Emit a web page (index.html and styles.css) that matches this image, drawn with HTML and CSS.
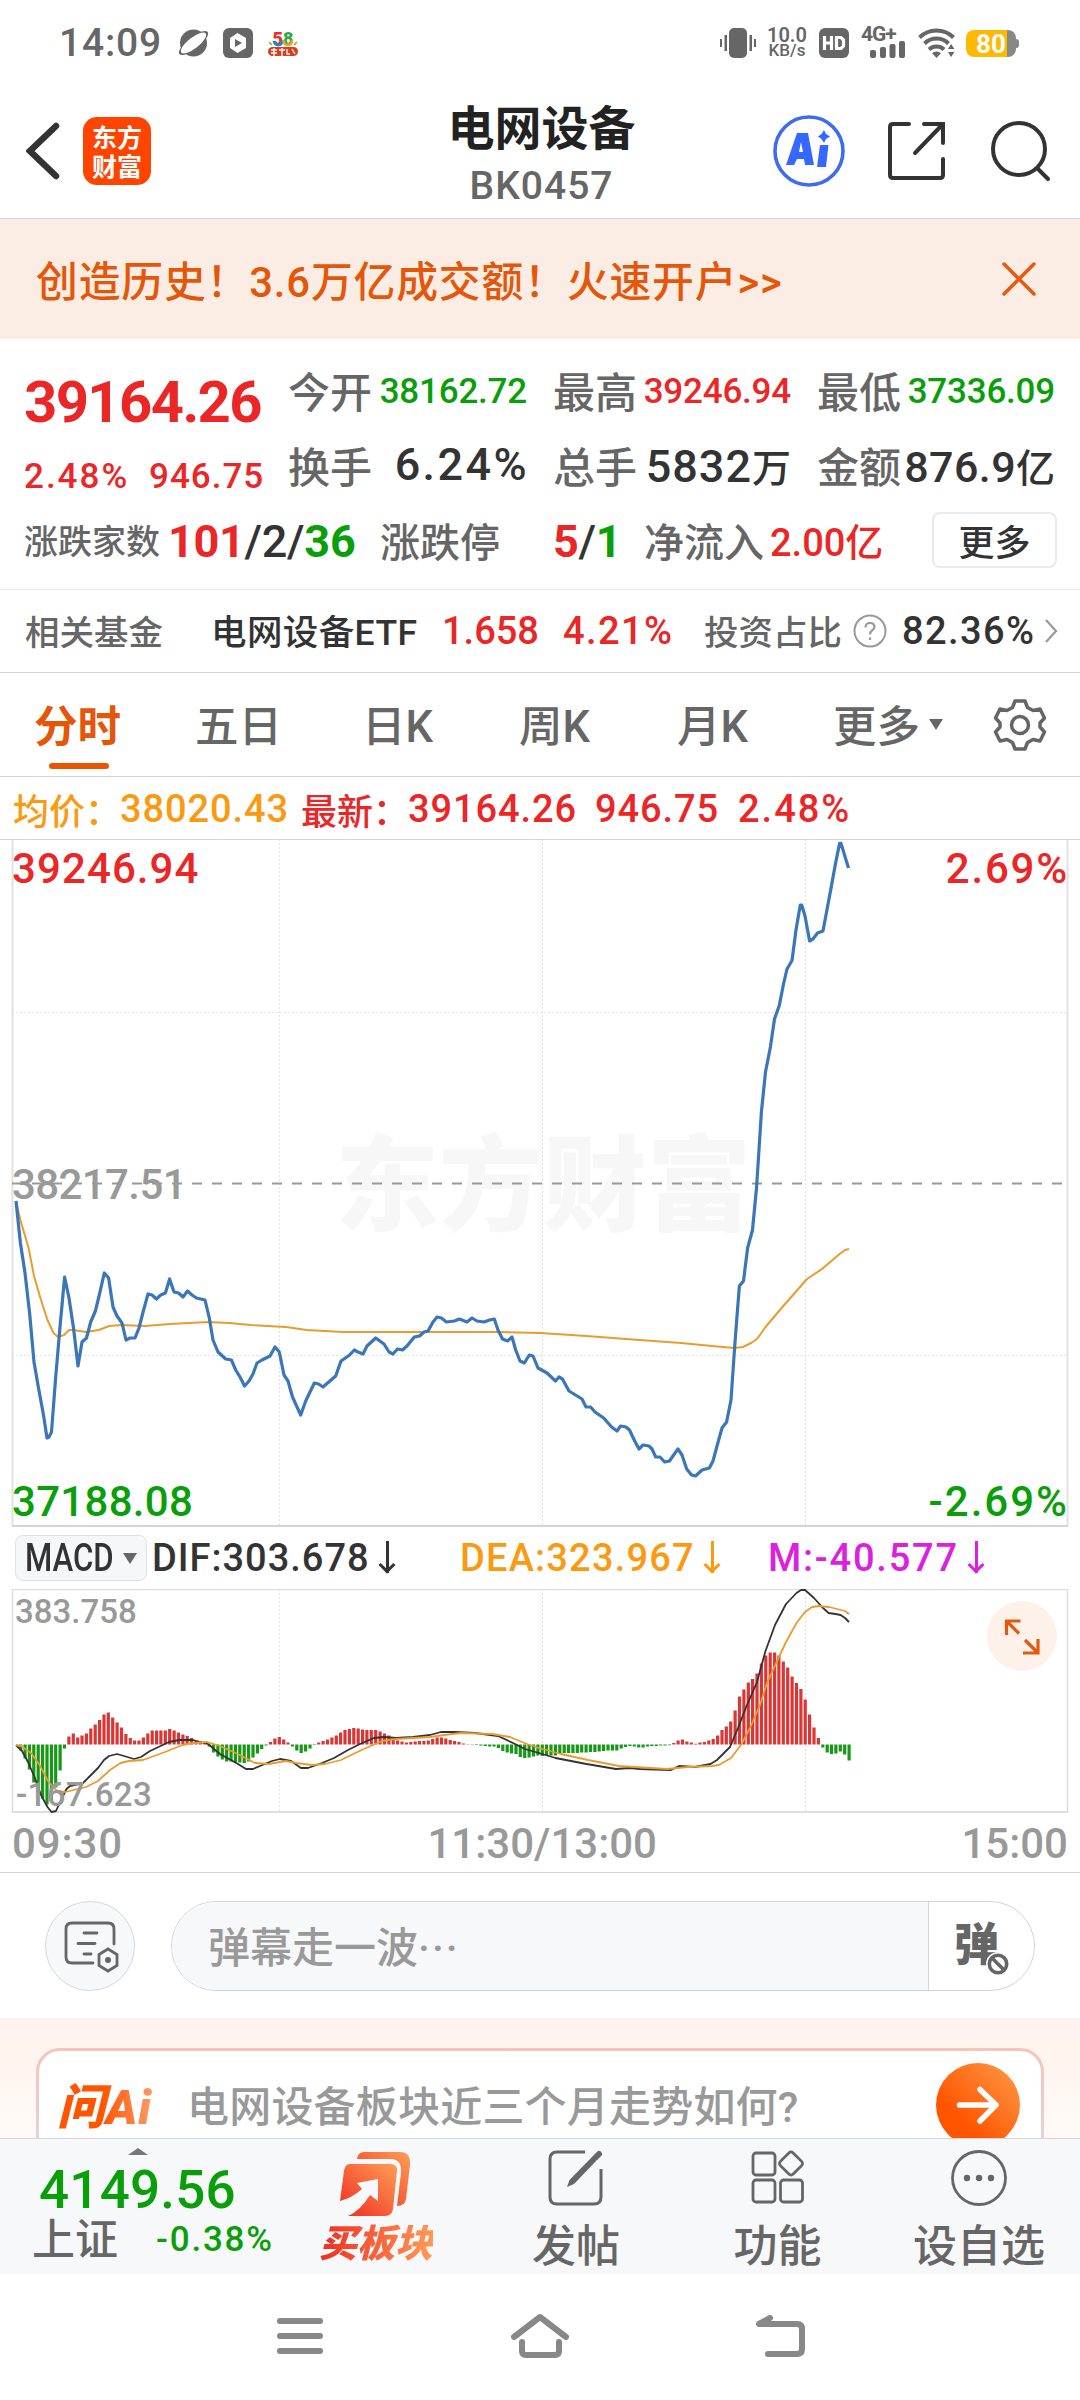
FILE: index.html
```html
<!DOCTYPE html>
<html lang="zh-CN">
	<head>
		<meta charset="UTF-8" />
		<meta name="viewport" content="width=device-width, initial-scale=1.0" />
		<title>电网设备 BK0457</title>
		<link rel="stylesheet" href="styles.css">
	</head>
	<body>
		<div class="page">
			<div class="status">
				<span class="clock">14:09</span>
				<svg class="st-planet" width="31" height="28" viewBox="0 0 31 28">
					<circle cx="15.500" cy="14" r="13.500" fill="#666" />
					<ellipse cx="15.500" cy="14" rx="18" ry="6" transform="rotate(-38 15.500 14)" fill="#666" />
					<ellipse cx="15.500" cy="14" rx="15.500" ry="5.500" transform="rotate(-38 15.500 14)" fill="#fff" />
				</svg>
				<svg class="st-play" width="30" height="30" viewBox="0 0 30 30">
					<rect width="30" height="30" rx="6" fill="#666" />
					<path d="M14.500 5 L23 10 V20 L14.500 25 L7 20 V10 Z" fill="#fff" />
					<path d="M12 11 L19 15 L12 19 Z" fill="#666" />
				</svg>
				<svg class="st-58" width="30" height="30" viewBox="0 0 30 30">
					<text x="4.500" y="17" class="t58" fill="#e8312a">5</text>
					<text x="15" y="17" class="t58" fill="#2fa84a">8</text>
					<path d="M6 13 q1 4 4 4 q4 0 4 -5" stroke="#1f86d6" stroke-width="3" fill="none" />
					<path d="M15.500 12 q0 5 4.500 5 q4 0 4 -5" stroke="#f5a21d" stroke-width="2.500" fill="none" />
					<rect x="0" y="19" width="30" height="9" rx="4.500" fill="#d8401f" />
					<path d="M3 22 H9 M3 25 H9 M6 20 V28 M11 22 H17 M14 20 V28 M19 21 V26 H22 M24 21 L27 26" stroke="#fff" stroke-width="1.300" fill="none" />
					<path d="M1 14 l3 3 M29 14 l-3 3" stroke="#7cb342" stroke-width="1.500" />
				</svg>
				<span class="grow"></span>
				<svg width="36" height="30" viewBox="0 0 36 30" fill="#666">
					<rect x="9" y="0" width="18" height="30" rx="5" />
					<rect x="4.500" y="7" width="2.500" height="16" />
					<rect x="0" y="11" width="2" height="8" />
					<rect x="29.500" y="7" width="2.500" height="16" />
					<rect x="34" y="11" width="2" height="8" />
				</svg>
				<span class="speed"><b>10.0</b><i>KB/s</i></span>
				<svg class="st-hd" width="30" height="30" viewBox="0 0 30 30">
					<rect width="30" height="30" rx="6" fill="#666" />
					<path d="M5.500 8 V22 M12.500 8 V22 M5.500 15 H12.500 M17.500 9.500 H22 L24.500 12 V18 L22 20.500 H17.500 Z" fill="none" stroke="#fff" stroke-width="3.200" />
				</svg>
				<span class="net">
					<em>4G+</em>
					<svg width="36" height="17" viewBox="0 0 36 17" fill="#666">
						<rect x="0" y="9" width="6" height="8" rx="2" />
						<rect x="10" y="6" width="6" height="11" rx="2" />
						<rect x="19.500" y="3" width="6" height="14" rx="2" />
						<rect x="29" y="0" width="6" height="17" rx="2" />
					</svg>
				</span>
				<svg class="st-wifi" width="38" height="30" viewBox="0 0 38 30">
					<g fill="none" stroke="#666" stroke-width="4">
						<path d="M1.500 9.500 A24 24 0 0 1 35.500 9.500" />
						<path d="M6.500 15.500 A17 17 0 0 1 30.500 15.500" />
						<path d="M11 21.500 A11 11 0 0 1 26 21.500" />
					</g>
					<path d="M14 25 Q18.500 22 23 25 L18.500 30 Z M30 21 L33 16 L36.500 21 Z M30 24 L33 29 L36.500 24 Z" fill="#666" />
				</svg>
				<span class="battery"><span>80</span></span>
			</div>

			<div class="header">
				<svg class="back" width="34" height="58" viewBox="0 0 34 58">
					<path d="M30 4 L4 29 L30 54" fill="none" stroke="#333" stroke-width="6.500" stroke-linecap="round" stroke-linejoin="miter" />
				</svg>
				<div class="logo"><span>东方</span><span>财富</span></div>
				<div class="title">
					<h1>电网设备</h1>
					<p>BK0457</p>
				</div>
				<svg class="ai" width="74" height="74" viewBox="0 0 74 74">
					<circle cx="37" cy="37" r="34" fill="none" stroke="#3f6bf0" stroke-width="3.600" />
					<path fill="#3568ff" fill-rule="evenodd" d="M25 19 H36 L42 51 H33 L32 45 H25 L22 51 H14 Z M29 28 L27 38 H31 Z" />
					<path fill="#3568ff" d="M48 31 H56.500 L54 53 H45 Z M52 16 L54 20 L58 22.500 L54 25 L52 29 L49.500 25 L46 22.500 L49.500 20 Z" />
				</svg>
				<svg class="share" width="60" height="60" viewBox="0 0 60 60" fill="none" stroke="#333" stroke-width="4" stroke-linecap="round">
					<path d="M22 3 H6 Q3 3 3 6 V54 Q3 57 6 57 H53 Q56 57 56 54 V38" />
					<path d="M37 3 H56 V22" />
					<path d="M55 4 L28 32" />
				</svg>
				<svg class="search" width="62" height="62" viewBox="0 0 62 62" fill="none" stroke="#333" stroke-width="4" stroke-linecap="round">
					<circle cx="29" cy="29" r="26" />
					<path d="M48 49 L58 59" />
				</svg>
			</div>

			<div class="banner">
				<span>创造历史！3.6万亿成交额！火速开户&gt;&gt;</span>
				<svg width="34" height="34" viewBox="0 0 34 34">
					<path d="M2 2 L32 32 M32 2 L2 32" stroke="#e9580c" stroke-width="3.500" stroke-linecap="round" />
				</svg>
			</div>

			<div class="quote">
				<div class="quote-main">
					<div class="price red">39164.26</div>
					<div class="change red"><span class="pct">2.48%</span><span>946.75</span></div>
				</div>
				<div class="stats">
					<div class="stat"><label>今开</label><span class="sm green">38162.72</span></div>
					<div class="stat"><label>最高</label><span class="sm red">39246.94</span></div>
					<div class="stat"><label>最低</label><span class="sm green">37336.09</span></div>
					<div class="stat"><label>换手</label><span class="lg">6.24%</span></div>
					<div class="stat"><label>总手</label><span class="wan">5832<small>万</small></span></div>
					<div class="stat"><label>金额</label><span class="yi">876.9<small>亿</small></span></div>
				</div>
			</div>
			<div class="breadth">
				<label class="s34">涨跌家数</label>
				<span class="nums"><b class="red">101</b>/2/<b class="green">36</b></span>
				<label class="s40">涨跌停</label>
				<span class="nums"><b class="red">5</b>/<b class="green">1</b></span>
				<label class="s40">净流入</label>
				<span class="inflow red">2.00亿</span>
				<button class="more">更多</button>
			</div>

			<div class="fund">
				<label>相关基金</label>
				<span class="fund-name">电网设备ETF</span>
				<span class="red">1.658</span>
				<span class="ratio red">4.21%</span>
				<label>投资占比</label>
				<svg width="34" height="34" viewBox="0 0 34 34">
					<circle cx="17" cy="17" r="15.500" fill="none" stroke="#999" stroke-width="2" />
					<path d="M12.500 13.500 Q12.500 9 17 9 Q21.500 9 21.500 13 Q21.500 15 19 16.500 Q17 18 17 20.500 M17 23.500 V26" fill="none" stroke="#999" stroke-width="2.200" />
				</svg>
				<span class="ratio">82.36%</span>
				<svg width="14" height="26" viewBox="0 0 14 26">
					<path d="M2 2 L12 13 L2 24" fill="none" stroke="#999" stroke-width="2.200" />
				</svg>
			</div>

			<div class="tabs">
				<span class="tab active">分时</span>
				<span class="tab">五日</span>
				<span class="tab">日K</span>
				<span class="tab">周K</span>
				<span class="tab">月K</span>
				<span class="tab">更多</span>
				<i class="caret"></i>
				<svg width="54" height="54" viewBox="0 0 54 54" fill="none" stroke="#666" stroke-width="3.500">
					<path d="M22 3 H32 L34.500 9.500 L40 12.500 L47 11 L51.500 20 L47 25 V29 L51.500 34 L47 43 L40 41.500 L34.500 44.500 L32 51 H22 L19.500 44.500 L14 41.500 L7 43 L2.500 34 L7 29 V25 L2.500 20 L7 11 L14 12.500 L19.500 9.500 Z" stroke-linejoin="round" />
					<circle cx="27" cy="27" r="8.500" />
				</svg>
			</div>

			<div class="legend">
				<span class="orange">均价：</span>
				<span class="num orange">38020.43</span>
				<span class="red">最新：</span>
				<span class="num red">39164.26</span>
				<span class="num red">946.75</span>
				<span class="num pct red">2.48%</span>
			</div>

			<div class="chart">
				<svg width="1080" height="689" viewBox="0 0 1080 689">
					<text class="watermark" x="335" y="384">东方财富</text>
					<g stroke="#e2e2e2" stroke-width="1" stroke-dasharray="2 2">
						<path d="M279.500 0 V687 M542.500 0 V687 M805.500 0 V687 M12 173.500 H1067 M12 516.500 H1067" />
					</g>
					<path d="M12.500 0 V687 M1067.500 0 V687" stroke="#e2e2e2" stroke-width="2" />
					<path d="M0 .5 H1080" stroke="#d4d4d4" />
					<path d="M12 687 H1068" stroke="#d4d4d4" stroke-width="2" />
					<path d="M12 344.500 H1067" stroke="#999" stroke-width="2" stroke-dasharray="10 10" />
					<polyline id="avg" fill="none" stroke="#eb9b2d" stroke-width="2" stroke-linejoin="round" />
					<polyline id="price" fill="none" stroke="#3a76b8" stroke-width="3.200" stroke-linejoin="round" />
				</svg>
				<span class="lab top-left red">39246.94</span>
				<span class="lab top-right red">2.69%</span>
				<span class="lab mid-left">38217.51</span>
				<span class="lab bottom-left green">37188.08</span>
				<span class="lab bottom-right green">-2.69%</span>
			</div>

			<div class="indicator">
				<span class="picker"><b>MACD</b><i class="caret"></i></span>
				<span class="dif">DIF:303.678<i class="down"></i></span>
				<span class="dea orange">DEA:323.967<i class="down"></i></span>
				<span class="m purple">M:-40.577<i class="down"></i></span>
			</div>

			<div class="macd">
				<svg width="1080" height="225" viewBox="0 0 1080 225">
					<path d="M279.500 0 V223 M542.500 0 V223 M805.500 0 V223" stroke="#e2e2e2" stroke-dasharray="2 2" />
					<path d="M12 .5 H1068 M12.500 0 V223 M1067.500 0 V223" stroke="#dedede" stroke-width="1.500" />
					<path d="M12 223 H1068" stroke="#dedede" stroke-width="2" />
					<g id="bars"></g>
					<polyline id="dif" fill="none" stroke="#333" stroke-width="1.800" stroke-linejoin="round" />
					<polyline id="dea" fill="none" stroke="#eb9b2d" stroke-width="1.800" stroke-linejoin="round" />
				</svg>
				<span class="lab macd-max">383.758</span>
				<span class="lab macd-min">-167.623</span>
				<svg class="expand" width="70" height="70" viewBox="0 0 70 70">
					<circle cx="35" cy="35" r="35" fill="#fef1ea" />
					<path d="M19.500 34 V20 H33.500 M20 20.500 L32 32.500 M51 38 V52 H36 M50.500 51.500 L38 39" fill="none" stroke="#e25a10" stroke-width="3.200" />
				</svg>
			</div>
			<div class="times"><span class="open">09:30</span><span>11:30/13:00</span><span>15:00</span></div>

			<div class="danmu">
				<div class="danmu-set">
					<svg width="56" height="52" viewBox="0 0 56 52" fill="none" stroke="#666" stroke-width="2.800" stroke-linecap="round">
						<path d="M51 23 V8 Q51 2 45 2 H9 Q3 2 3 8 V36 Q3 42 9 42 H30" />
						<path d="M21 12 H34 M15 22.500 H32 M21 33 H28" />
						<path d="M45 28 L54 33.500 V44.500 L45 50 L36 44.500 V33.500 Z" />
						<circle cx="45" cy="39" r="3" fill="#666" stroke="none" />
					</svg>
				</div>
				<div class="danmu-box">
					<div class="danmu-input">弹幕走一波<span>···</span></div>
					<div class="danmu-switch">
						<span>弹</span>
						<svg width="24" height="24" viewBox="0 0 24 24">
							<circle cx="12" cy="12" r="12" fill="#fff" />
							<circle cx="12" cy="12" r="8.700" fill="none" stroke="#666" stroke-width="3.600" />
							<path d="M6.500 6.500 L17.500 17.500" stroke="#666" stroke-width="3.500" />
						</svg>
					</div>
				</div>
			</div>

			<div class="ask">
				<div class="ask-card">
					<span class="ask-logo">问Ai</span>
					<span class="ask-text">电网设备板块近三个月走势如何?</span>
					<svg width="84" height="84" viewBox="0 0 84 84">
						<defs>
							<linearGradient id="go" x1=".3" y1=".7" x2=".9" y2=".1">
								<stop offset="0" stop-color="#ff5500" />
								<stop offset="1" stop-color="#ff9240" />
							</linearGradient>
						</defs>
						<circle cx="42" cy="42" r="42" fill="url(#go)" />
						<path d="M23.500 42 H60 M44 26.500 L60 42 L44 58" fill="none" stroke="#fff" stroke-width="5.500" stroke-linecap="round" stroke-linejoin="round" />
					</svg>
				</div>
			</div>

			<div class="toolbar">
				<div class="index">
					<i class="up"></i>
					<div class="index-price green">4149.56</div>
					<div class="index-row"><span>上证</span><em class="green">-0.38%</em></div>
				</div>
				<div class="tool buy">
					<svg width="72" height="66" viewBox="0 0 72 66">
						<defs>
							<linearGradient id="hot" x1="0" y1="1" x2="1" y2="0">
								<stop offset="0" stop-color="#f02a22" />
								<stop offset="1" stop-color="#ff9f56" />
							</linearGradient>
						</defs>
						<path d="M17 8 Q18 1 24 1 H60 Q71 1 70 14 L66 48 Q65 55 57 55 L61 22 Q62 9 52 8 Z" fill="url(#hot)" />
						<path d="M10 13 H50 Q58 13 57 20 L53 58 Q52 65 45 65 H8 Q20 60 30 44 L38 50 V28 L17 32 L22 38 Q12 47 0 50 L4 20 Q5 13 10 13 Z" fill="url(#hot)" />
					</svg>
					<span>买板块</span>
				</div>
				<div class="tool">
					<svg width="58" height="58" viewBox="0 0 58 58" fill="none" stroke="#666" stroke-width="3">
						<path d="M38 3 H10 Q3 3 3 10 V48 Q3 55 10 55 H47 Q54 55 54 48 V20" />
						<path d="M20 38 L22.500 31 L45 8 L49 12 L27 35 Z" fill="#666" stroke="none" />
						<path d="M48 9 L52 5" stroke-width="6" stroke-linecap="round" />
					</svg>
					<span>发帖</span>
				</div>
				<div class="tool">
					<svg width="54" height="58" viewBox="0 0 54 58" fill="none" stroke="#666" stroke-width="2.800">
						<rect x="2" y="4" width="22" height="22" rx="3" />
						<rect x="2" y="31" width="22" height="22" rx="3" />
						<rect x="29.500" y="31" width="22" height="22" rx="3" />
						<rect x="31" y="5.500" width="18" height="18" rx="3" transform="rotate(45 40 14.500)" />
					</svg>
					<span>功能</span>
				</div>
				<div class="tool fav">
					<svg width="58" height="58" viewBox="0 0 58 58">
						<circle cx="29" cy="29" r="26.500" fill="none" stroke="#666" stroke-width="2.800" />
						<g fill="#666"><circle cx="17" cy="29" r="3.200" /><circle cx="29" cy="29" r="3.200" /><circle cx="41" cy="29" r="3.200" /></g>
					</svg>
					<span>设自选</span>
				</div>
			</div>

			<div class="sysnav">
				<svg width="46" height="38" viewBox="0 0 46 38" stroke="#888" stroke-width="6" stroke-linecap="round">
					<path d="M3 4 H43 M3 19 H43 M3 34 H43" />
				</svg>
				<svg width="60" height="46" viewBox="0 0 60 46" fill="none" stroke="#888" stroke-width="6" stroke-linecap="round" stroke-linejoin="round">
					<path d="M4 24 L30 4 L56 24 M12 29 V38 Q12 42 16 42 H45 Q49 42 49 38 V29" />
				</svg>
				<svg width="50" height="44" viewBox="0 0 50 44" fill="none" stroke="#888" stroke-width="6" stroke-linecap="round" stroke-linejoin="round">
					<path d="M14 4 L3 10 H41 Q46 10 46 15 V35 Q46 40 41 40 H12" />
				</svg>
			</div>
		</div>
		<script src="chart.js"></script>
	</body>
</html>
```
FILE: styles.css
```css
body,
html {
	margin: 0;
	padding: 0;
	background: #fff;
}
* {
	box-sizing: border-box;
}
.page {
	width: 1080px;
	height: 2400px;
	overflow: hidden;
	display: flex;
	flex-direction: column;
	font-family: Roboto, "Noto Sans CJK SC", sans-serif;
	font-weight: 500;
	color: #333;
	white-space: nowrap;
}
.page > * {
	flex: none;
}
svg {
	display: block;
	flex: none;
}
i,
em {
	font-style: normal;
}
.red {
	color: #ea2626;
}
.green {
	color: #0a9f0a;
}
.orange {
	color: #fa9a10;
}
.purple {
	color: #dc20e0;
}
.grow {
	flex: 1;
}

/* status bar */
.status {
	height: 84px;
	padding: 1px 64px 0 59px;
	display: flex;
	align-items: center;
	color: #666;
}
.clock {
	font-size: 39px;
	width: 119px;
	letter-spacing: 0.8px;
}
.st-play {
	margin-left: 14px;
}
.st-58 {
	margin-left: 15px;
	overflow: visible;
}
.t58 {
	font: 900 18px Roboto, sans-serif;
}
.speed {
	width: 40px;
	margin-left: 11px;
	display: flex;
	flex-direction: column;
	align-items: center;
}
.speed b {
	font-size: 20px;
	font-weight: 600;
	line-height: 16px;
}
.speed i {
	font-size: 17px;
	line-height: 15px;
}
.st-hd {
	margin-left: 12px;
}
.net {
	margin-left: 12px;
	width: 46px;
	height: 30px;
	display: flex;
	flex-direction: column;
}
.net em {
	font-size: 21px;
	font-weight: 700;
	line-height: 13px;
	letter-spacing: -1px;
}
.net svg {
	margin-left: 9px;
}
.st-wifi {
	margin-left: 11px;
}
.battery {
	margin-left: 10px;
	width: 50px;
	height: 27px;
	border-radius: 8px;
	background: linear-gradient(90deg, #ffb900 41px, #888 41px);
	position: relative;
	top: 1px;
	text-align: center;
}
.battery:after {
	content: '';
	position: absolute;
	right: -3px;
	top: 9px;
	width: 3px;
	height: 9px;
	border-radius: 0 3px 3px 0;
	background: #888;
}
.battery span {
	display: block;
	font-size: 26px;
	font-weight: 700;
	line-height: 28px;
	color: #fff;
}

/* header */
.header {
	height: 135px;
	border-bottom: 1px solid #d4d6d8;
	display: flex;
	align-items: center;
	padding-left: 26px;
}
.logo {
	width: 68px;
	height: 68px;
	margin-left: 23px;
	border-radius: 14px;
	background: #ff4400;
	color: #fff;
	display: flex;
	flex-direction: column;
	align-items: center;
	justify-content: center;
	font-family: "Noto Sans CJK SC", sans-serif;
	font-size: 25px;
	font-weight: 700;
	line-height: 29px;
}
.title {
	width: 621px;
	text-align: center;
	padding: 13px 0 0 160px;
}
.title h1 {
	margin: 0;
	padding-top: 2px;
	font-size: 47px;
	font-weight: 600;
	line-height: 54px;
	color: #222;
}
.title p {
	margin: 0;
	font-size: 39px;
	line-height: 60px;
	letter-spacing: 1px;
	color: #666;
}
.share {
	margin-left: 41px;
}
.search {
	margin-left: 43px;
}
.banner {
	height: 120px;
	background: #fcede4;
	color: #e4570b;
	display: flex;
	align-items: center;
	justify-content: space-between;
	padding: 0 44px 1px 36px;
	font-size: 41.800px;
}
.banner span {
	letter-spacing: 0.85px;
}

/* quote */
.quote {
	height: 166px;
	padding: 13px 0 0 24px;
	display: grid;
	grid-template-columns: 264px 767px;
}
.price {
	font-size: 58px;
	font-weight: 700;
	line-height: 80px;
	padding-top: 10px;
	letter-spacing: -1.6px;
}
.change {
	display: grid;
	grid-template-columns: 125px 1fr;
	font-size: 35px;
	line-height: 69px;
	letter-spacing: 1px;
}
.pct {
	letter-spacing: 2px;
}
.stats {
	display: grid;
	grid-template-columns: 239px 238px 238px;
	grid-auto-rows: 75px;
	column-gap: 26px;
}
.stat {
	display: flex;
	align-items: center;
	justify-content: space-between;
}
.stat label {
	font-size: 42px;
	color: #666;
}
.sm {
	font-size: 35px;
	letter-spacing: -0.2px;
	padding-top: 3px;
}
.lg {
	font-size: 45px;
	letter-spacing: 2.4px;
	margin-right: -2px;
}
.wan {
	font-size: 45px;
	letter-spacing: 1px;
}
.yi {
	font-size: 43px;
	letter-spacing: 0.4px;
}
.wan small,
.yi small {
	font-size: 39px;
	letter-spacing: 0;
}
.breadth {
	height: 85px;
	padding: 0 0 15px 24px;
	border-bottom: 1px solid #ececec;
	display: grid;
	grid-template-columns: 144px 212px 173px 91px 126px 162px 125px;
	align-items: center;
}
.breadth label,
.fund label {
	color: #666;
}
.s34 {
	font-size: 34px;
}
.s40 {
	font-size: 40px;
}
.nums {
	font-size: 45px;
	letter-spacing: -0.3px;
	padding-top: 3px;
}
.nums b {
	font-weight: 700;
}
.inflow {
	font-size: 38px;
}
.more {
	height: 56px;
	padding: 0 0 4px;
	border: 2px solid #e8eaec;
	border-radius: 8px;
	background: #fff;
	color: #333;
	font: inherit;
	font-size: 36px;
}
.fund {
	height: 83px;
	padding-left: 25px;
	border-bottom: 1px solid #d4d4d4;
	display: grid;
	grid-template-columns: 186px 231px 121px 141px 149px 49px 142px 14px;
	align-items: center;
	font-size: 38px;
}
.fund label {
	font-size: 34.500px;
	padding-bottom: 3px;
}
.fund-name {
	font-size: 35.500px;
	letter-spacing: 0.4px;
	padding-bottom: 3px;
}
.ratio {
	letter-spacing: 1.4px;
}

/* tabs */
.tabs {
	height: 104px;
	border-bottom: 1px solid #d4d4d4;
	padding-left: 34px;
	display: grid;
	grid-template-columns: 161px 167px 157px 158px 156px 96px 64px 54px;
	align-items: center;
	font-size: 43.500px;
	color: #666;
}
.tab {
	padding-top: 6px;
	line-height: 97px;
	position: relative;
}
.tab.active {
	color: #e4570b;
	font-weight: 600;
}
.tab.active:after {
	content: '';
	position: absolute;
	left: 15px;
	bottom: 7px;
	width: 60px;
	height: 6px;
	border-radius: 3px;
	background: #ea5504;
}
.caret {
	display: inline-block;
	width: 0;
	border: 7.500px solid transparent;
	border-top: 11px solid #666;
	border-bottom: 0;
}
.legend {
	height: 62px;
	padding: 1px 0 0 13px;
	display: grid;
	grid-template-columns: 107px 181px 107px 187px 143px 130px;
	align-items: center;
	font-size: 36px;
}
.legend .num {
	font-size: 38px;
	letter-spacing: 0.9px;
}
.legend .pct {
	letter-spacing: 2px;
}

/* intraday chart */
.chart {
	height: 688px;
	position: relative;
}
.watermark {
	font-family: "Noto Sans CJK SC", sans-serif;
	font-weight: 900;
	font-size: 104px;
	fill: #f7f7f7;
}
.lab {
	position: absolute;
	font-size: 42px;
	line-height: 44px;
}
.top-left {
	left: 12px;
	top: 8px;
	letter-spacing: 1.1px;
}
.top-right {
	right: 11px;
	top: 8px;
	letter-spacing: 1.8px;
}
.mid-left {
	left: 12px;
	top: 324px;
	letter-spacing: -0.6px;
	color: #999;
}
.bottom-left {
	left: 12px;
	bottom: 3px;
	letter-spacing: 0.3px;
}
.bottom-right {
	right: 11px;
	bottom: 3px;
	letter-spacing: 2px;
}
.indicator {
	height: 62px;
	padding-left: 15px;
	display: grid;
	grid-template-columns: 137px 308px 308px 1fr;
	align-items: center;
	font-size: 38px;
}
.picker {
	width: 132px;
	height: 46px;
	border: 1px solid #dfe2e6;
	border-radius: 8px;
	background: #f6f7f9;
	display: flex;
	align-items: center;
	padding-left: 9px;
	gap: 9px;
}
.picker b {
	width: 89px;
	font-weight: 500;
	font-size: 38px;
	transform: scaleX(0.82);
	transform-origin: left;
}
.dif {
	letter-spacing: 1px;
}
.dea {
	letter-spacing: 1.2px;
}
.m {
	letter-spacing: 1.8px;
}
.down {
	display: inline-block;
	width: 3px;
	height: 32px;
	margin-left: 16px;
	background: currentColor;
	position: relative;
	vertical-align: -2px;
}
.down:after {
	content: '';
	position: absolute;
	left: -4.500px;
	bottom: 2px;
	width: 12px;
	height: 12px;
	border: solid currentColor;
	border-width: 0 3px 3px 0;
	transform: rotate(45deg);
	box-sizing: border-box;
}
.macd {
	height: 225px;
	position: relative;
	color: #999;
}
.macd-max {
	left: 15px;
	top: 1px;
	font-size: 33px;
}
.macd-min {
	left: 16px;
	bottom: -3px;
	font-size: 33px;
	letter-spacing: 0.4px;
}
.expand {
	position: absolute;
	right: 23px;
	top: 12px;
}
.times {
	height: 59px;
	border-bottom: 1px solid #d4d4d4;
	padding: 1px 12px 0;
	display: flex;
	align-items: center;
	justify-content: space-between;
	font-size: 42px;
	color: #999;
}
.open {
	letter-spacing: 0.9px;
}

/* comment bar */
.danmu {
	height: 145px;
	padding: 0 45px 0 45px;
	display: flex;
	align-items: center;
	gap: 36px;
}
.danmu-set {
	width: 90px;
	height: 90px;
	border: 1px solid #d6d8dc;
	border-radius: 45px;
	background: #f7f8fa;
	display: flex;
	align-items: center;
	justify-content: center;
	padding: 3px 0 0 2px;
}
.danmu-box {
	flex: 1;
	height: 90px;
	border: 1px solid #d2d4da;
	border-radius: 45px;
	overflow: hidden;
	display: flex;
}
.danmu-input {
	width: 757px;
	padding-left: 36px;
	border-right: 1px solid #d2d4da;
	background: #f7f8fa;
	color: #999;
	font-size: 42px;
	line-height: 94px;
}
.danmu-input span {
	letter-spacing: 2px;
}
.danmu-switch {
	flex: 1;
	position: relative;
	padding-left: 25px;
	font-size: 45px;
	font-weight: 900;
	line-height: 88px;
	color: #666;
}
.danmu-switch svg {
	position: absolute;
	left: 57px;
	top: 50px;
}

/* ask ai */
.ask {
	height: 120px;
	padding: 30px 36px 0;
	overflow: hidden;
	background: linear-gradient(#fff1ef, #fff4ee 30%, #fffaf7);
}
.ask-card {
	height: 140px;
	border: 3px solid transparent;
	border-radius: 24px;
	background: linear-gradient(#fff, #fff) padding-box, linear-gradient(#f8c3b8, #dcd8ea) border-box;
	display: flex;
	align-items: flex-start;
	padding: 12px 21px 0 18px;
	line-height: 89px;
}
.ask-logo {
	width: 130px;
	font-size: 48px;
	font-weight: 900;
	font-style: italic;
	letter-spacing: 0.8px;
	background: linear-gradient(90deg, #ff5500 45px, #ffa070 100px);
	-webkit-background-clip: text;
	background-clip: text;
	color: transparent;
}
.ask-text {
	flex: 1;
	font-size: 42px;
	letter-spacing: 0.2px;
	color: #999;
}

/* bottom toolbar */
.toolbar {
	height: 136px;
	border-top: 1px solid #d4d6d8;
	background: #f7f8fa;
	display: grid;
	grid-template-columns: 296px 162px 236px 167px 219px;
}
.index {
	padding-left: 32px;
	position: relative;
}
.up {
	position: absolute;
	left: 128px;
	top: 9px;
	border: 10.500px solid transparent;
	border-bottom: 7px solid #777;
	border-top: 0;
}
.index-price {
	padding: 20px 0 0 7px;
	font-size: 53px;
	line-height: 62px;
	letter-spacing: 0.2px;
}
.index-row {
	display: grid;
	grid-template-columns: 124px 1fr;
	align-items: center;
	line-height: 38px;
	font-size: 43px;
	color: #666;
}
.index-row em {
	font-size: 35px;
	letter-spacing: 1.8px;
}
.tool {
	display: flex;
	flex-direction: column;
	align-items: center;
	padding-top: 10px;
	font-size: 44px;
	line-height: 80px;
	color: #666;
}
.fav {
	padding-left: 17px;
}
.buy {
	padding: 12px 2px 0 0;
}
.buy span {
	margin-top: -1px;
	font-size: 38px;
	font-weight: 900;
	font-style: italic;
	line-height: 56px;
	background: linear-gradient(90deg, #ef2c22, #ff9a55);
	-webkit-background-clip: text;
	background-clip: text;
	color: transparent;
}
.sysnav {
	height: 126px;
	padding: 0 274px 2px 277px;
	display: flex;
	align-items: center;
	justify-content: space-between;
}
```
FILE: chart.js
```js
let d = document,
	g = 'getElementById'

const price = [
	16,362, 20.4,404, 25,434, 29.6,474, 34,523, 38.5,549, 43.5,576, 47,599, 49,598, 51.5,593,
	55.7,538, 60,488, 64.6,438, 69,459, 73.5,489, 78,527, 82,503, 86.5,499, 90.7,483, 95.4,472,
	100,453, 104.3,434, 108.6,439, 113,468, 117,477, 122,484, 126,501, 130,499, 135,499, 139,489,
	143.6,471, 148,455, 152,456, 156.4,460, 160.7,456, 165.4,454, 169.6,440, 174,453, 178.6,454,
	183,458, 187.5,452, 192,456, 196.4,459, 205,461, 209.3,479, 213,501, 218,513, 225.7,520,
	231.4,521, 235.7,531, 240,538, 244.6,547, 249,542, 253,535, 257,524, 262,521, 270,517, 275,508,
	279.3,513, 284,536, 288,542, 292.5,558, 300.7,576, 305.7,562, 314.3,544, 318.6,545, 323,548,
	335.7,537, 341,522, 345.4,519, 349.6,516, 354.3,511, 358,513, 363,515, 367,507, 375.7,499,
	384,505, 389,513, 393,515, 397.5,510, 402.5,511, 407,507, 414.3,498, 419.6,497, 424,493,
	428,492, 433,483, 437,478, 441.4,479, 446.4,483, 454.3,482, 459.3,480, 467,483, 472,479,
	477,482, 484,483, 489.6,481, 494.3,480, 498,491, 502.5,500, 507.5,502, 512,498, 515.7,511,
	520,522, 524.3,524, 529.3,516, 533,517, 538,529, 547,534, 555.5,542, 559,538, 562.4,540,
	569,552, 582,560, 586,568, 590.6,568, 595,573, 603.7,579, 611.6,588, 617,592, 620.6,587,
	626,588, 629.5,591, 634.7,602, 639,610, 643,606, 649,607, 652,610, 655.7,618, 660,618,
	664.7,623, 669.5,622, 673.6,616, 678,610, 682,616, 686.7,630, 691.5,636, 695.6,637, 702,631,
	709.4,629, 713,622, 717.3,606, 722,589, 726.6,583, 731,561, 734.6,509, 737,477, 739.4,447,
	743.5,442, 747.6,409, 752.5,391, 756.6,348, 761.4,273, 765.5,233, 770.4,208, 774.5,180,
	779.3,166.5, 783.5,145, 787,130, 792,121.5, 796,91, 800.3,66, 801.7,66, 805,77, 809.6,102,
	813,100, 817.5,94, 823,92, 831.3,47.6, 835.5,24.6, 839.6,4.4, 841,4.4, 848.5,29,
]
const avg = [
	16,362, 20.4,381, 28.6,409, 34,437, 41,461, 47.5,481, 53.5,494, 58,498, 64,496, 69,491,
	73.5,491, 86,493, 99,491, 109,487, 121,486, 145,487, 170,485, 208,483, 229,484, 251,486,
	286,488, 307,491, 343,493, 500,493, 540,494, 586.5,497, 626,500, 681,504, 712,507, 734.6,509,
	743,508, 751,504, 757,500, 765.5,488, 779,472, 793,456, 807,440, 822,430, 839.6,415, 845,411,
	849,410,
]
const dif = [
	16,156, 22,162, 28,173, 34.5,188, 41,206, 47.5,218, 51.5,223, 56,222, 61,211, 66.5,200,
	70,197, 83,194, 90,187, 98,179, 104,171, 109,167, 117,165, 124,167, 134,170, 141,168, 150,162,
	169,153, 179,151, 193,151, 208,155, 220,165, 238,175, 246,180, 253,180, 260,177, 272,172,
	280,170, 291,172, 301,179, 308,179, 322,174, 334,169, 348,161, 360,155, 374,149, 384,148,
	396,149, 413,148, 430,146, 441,143, 455,143, 475,144, 498,147, 513,154, 525,160, 539,164,
	555.5,169, 586.5,175, 616,180, 629.5,179, 640,180, 671,181, 679,177, 695,178, 710.5,175,
	717,171, 730,158, 738,139, 746.6,117, 757,93, 765.5,62, 775,36, 786,15, 796.5,4, 801,1, 805,1,
	814,9, 822,18, 828.6,24, 835.5,25, 840.6,26, 845,29, 849,33,
]
const dea = [
	16,156, 21,157, 31,164, 39.6,176, 48,192, 57,202, 65.4,203, 86,198, 98,192, 110,181,
	120.5,174, 129,172, 143,171, 165,163, 182.5,156, 193,154, 207,153, 220,157, 238,165, 255,174,
	269,175, 286,172, 296,174, 312,176, 325,175, 341,171, 361.6,161, 382,152, 396,150, 430,148,
	444,146, 461,144, 492,145, 510,148, 527,155, 539,159, 561,165, 588,171, 619,177, 667,180,
	688,178, 712,177, 719,176, 731,169, 741,156, 750,139, 760,116, 767,94, 777.6,71, 786,53,
	796.5,34, 805,23, 812,18, 819,17, 829,18, 845,22, 849,25,
]
// one bar a minute, from 09:30
const macd = [
	0, -6, -14, -25, -38, -48, -54, -60, -58, -43, -26, -4, 8, 11, 7, 9, 11, 16, 20, 24.5,
	30, 32, 27, 22, 17, 10.5, 6.5, 4, 4, 7, 11, 14, 14, 14, 14, 15.5, 14, 12, 10, 8.5,
	6.5, 4, 3, 1.5, -2, -8, -12, -15, -17, -17, -18, -18, -18.5, -17, -13, -9, -4.5, -1, 2.5, 6,
	7.5, 5, 2, -2, -6, -8.5, -7, -4, -0.5, 2, 3.5, 5, 7, 9, 12, 14.5, 15.5, 16.5, 16, 15,
	14.5, 14.5, 14.5, 13, 11, 9, 6, 4, 3, 2, 2.5, 3, 3.5, 3.5, 4, 5.5, 7, 7, 6, 4.5,
	3.5, 2.5, 1, 0.3, 0.3, -0.5, -1, -1.5, -2, -2, -3.5, -6.5, -8, -9, -9.5, -12.5, -13.5, -13, -12, -11,
	-11.5, -11, -11, -11, -9, -8.5, -8.5, -8.5, -8.5, -8, -8, -7.5, -7.5, -7, -6.5, -6, -6, -6, -4, -2.5,
	-1.5, -2, -3, -3, -2, -1.5, -1.5, -1, -1, -0.7, 1.5, 4, 5, 3, 2, 0.7, 2, 2.5, 4, 5.5,
	9, 14.5, 18, 23, 34, 48, 55, 62, 65.5, 71, 81, 89, 92, 92, 89, 83, 77, 68, 61.5, 55.5,
	45, 30, 17, 6.5, -3, -8, -9.5, -9, -7, -10, -16,
]

d[g]('price').setAttribute('points', price.join(' '))
d[g]('avg').setAttribute('points', avg.join(' '))
d[g]('dif').setAttribute('points', dif.join(' '))
d[g]('dea').setAttribute('points', dea.join(' '))

const zero = 155.5
d[g]('bars').innerHTML = macd
	.map((v, i) => {
		let x = (14.7 + i * 4.383).toFixed(1)
		let y = v > 0 ? zero - v : zero
		let color = v > 0 ? '#d93636' : '#169a16'
		return `<rect x="${x}" y="${y}" width="3.2" height="${Math.abs(v)}" fill="${color}" />`
	})
	.join('')
```
